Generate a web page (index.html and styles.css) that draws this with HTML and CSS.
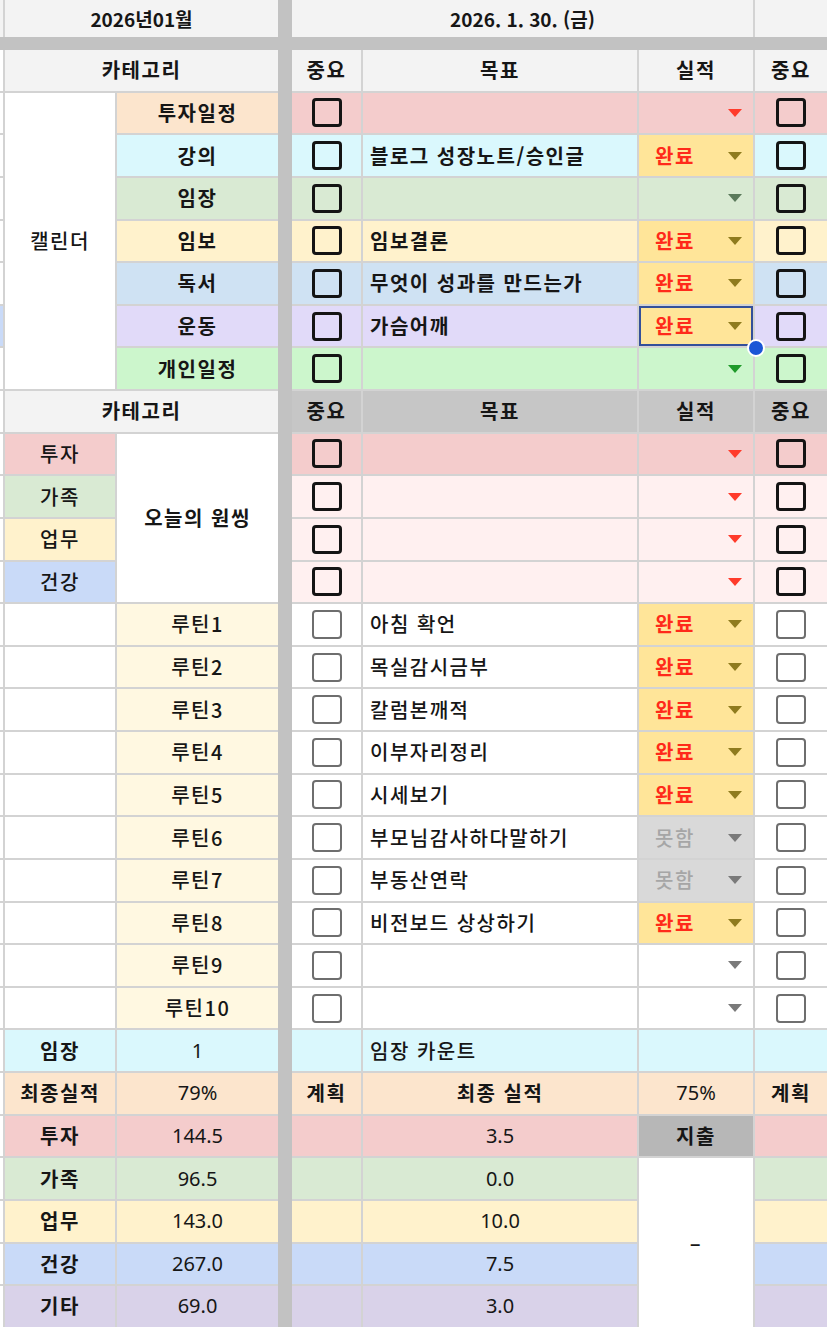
FILE: index.html
```html
<!DOCTYPE html>
<html lang="ko">
<head>
<meta charset="utf-8">
<title>2026년01월</title>
<link rel="stylesheet" href="styles.css">
</head>
<body>
<div class="sheet">
  <div class="sep"></div>
  <div class="band"></div>

  <!-- header -->
  <div class="c hd"></div>
  <div class="c hd b s2 ttl">2026년01월</div>
  <div class="c hd b s3 ttl">2026. 1. 30. (금)</div>
  <div class="c hd"></div>

  <!-- category header -->
  <div class="c"></div>
  <div class="c hd b s2">카테고리</div>
  <div class="c hd b">중요</div>
  <div class="c hd b">목표</div>
  <div class="c hd b">실적</div>
  <div class="c hd b">중요</div>

  <!-- calendar -->
  <div class="c"></div>
  <div class="c cal">캘린더</div>
  <div class="c peach b">투자일정</div>
  <div class="c pink"><i class="cb"></i></div>
  <div class="c pink t"></div>
  <div class="c pink dd"><span></span><i class="ar ar-r"></i></div>
  <div class="c pink"><i class="cb"></i></div>

  <div class="c"></div>
  <div class="c cyan b">강의</div>
  <div class="c cyan"><i class="cb"></i></div>
  <div class="c cyan t b">블로그 성장노트/승인글</div>
  <div class="c gold dd"><span class="done">완료</span><i class="ar ar-y"></i></div>
  <div class="c cyan"><i class="cb"></i></div>

  <div class="c"></div>
  <div class="c green b">임장</div>
  <div class="c green"><i class="cb"></i></div>
  <div class="c green t"></div>
  <div class="c green dd"><span></span><i class="ar ar-dg"></i></div>
  <div class="c green"><i class="cb"></i></div>

  <div class="c"></div>
  <div class="c yel b">임보</div>
  <div class="c yel"><i class="cb"></i></div>
  <div class="c yel t b">임보결론</div>
  <div class="c gold dd"><span class="done">완료</span><i class="ar ar-y"></i></div>
  <div class="c yel"><i class="cb"></i></div>

  <div class="c"></div>
  <div class="c blue b">독서</div>
  <div class="c blue"><i class="cb"></i></div>
  <div class="c blue t b">무엇이 성과를 만드는가</div>
  <div class="c gold dd"><span class="done">완료</span><i class="ar ar-y"></i></div>
  <div class="c blue"><i class="cb"></i></div>

  <div class="c tint"></div>
  <div class="c lav b">운동</div>
  <div class="c lav"><i class="cb"></i></div>
  <div class="c lav t b">가슴어깨</div>
  <div class="c gold dd sel"><span class="done">완료</span><i class="ar ar-y"></i><span class="handle"></span></div>
  <div class="c lav"><i class="cb"></i></div>

  <div class="c"></div>
  <div class="c lgreen b">개인일정</div>
  <div class="c lgreen"><i class="cb"></i></div>
  <div class="c lgreen t"></div>
  <div class="c lgreen dd"><span></span><i class="ar ar-gr"></i></div>
  <div class="c lgreen"><i class="cb"></i></div>

  <!-- category header 2 -->
  <div class="c"></div>
  <div class="c hd b s2">카테고리</div>
  <div class="c hd2 b">중요</div>
  <div class="c hd2 b">목표</div>
  <div class="c hd2 b">실적</div>
  <div class="c hd2 b">중요</div>

  <!-- one thing -->
  <div class="c"></div>
  <div class="c pink m">투자</div>
  <div class="c one b">오늘의 원씽</div>
  <div class="c pink"><i class="cb"></i></div>
  <div class="c pink t"></div>
  <div class="c pink dd"><span></span><i class="ar ar-r"></i></div>
  <div class="c pink"><i class="cb"></i></div>

  <div class="c"></div>
  <div class="c green m">가족</div>
  <div class="c blush"><i class="cb"></i></div>
  <div class="c blush t"></div>
  <div class="c blush dd"><span></span><i class="ar ar-r"></i></div>
  <div class="c blush"><i class="cb"></i></div>

  <div class="c"></div>
  <div class="c yel m">업무</div>
  <div class="c blush"><i class="cb"></i></div>
  <div class="c blush t"></div>
  <div class="c blush dd"><span></span><i class="ar ar-r"></i></div>
  <div class="c blush"><i class="cb"></i></div>

  <div class="c"></div>
  <div class="c blue2 m">건강</div>
  <div class="c blush"><i class="cb"></i></div>
  <div class="c blush t"></div>
  <div class="c blush dd"><span></span><i class="ar ar-r"></i></div>
  <div class="c blush"><i class="cb"></i></div>

  <!-- routines -->
  <div class="c"></div><div class="c"></div>
  <div class="c cream m">루틴1</div>
  <div class="c"><i class="cb g"></i></div>
  <div class="c t m">아침 확언</div>
  <div class="c gold dd"><span class="done">완료</span><i class="ar ar-y"></i></div>
  <div class="c"><i class="cb g"></i></div>

  <div class="c"></div><div class="c"></div>
  <div class="c cream m">루틴2</div>
  <div class="c"><i class="cb g"></i></div>
  <div class="c t m">목실감시금부</div>
  <div class="c gold dd"><span class="done">완료</span><i class="ar ar-y"></i></div>
  <div class="c"><i class="cb g"></i></div>

  <div class="c"></div><div class="c"></div>
  <div class="c cream m">루틴3</div>
  <div class="c"><i class="cb g"></i></div>
  <div class="c t m">칼럼본깨적</div>
  <div class="c gold dd"><span class="done">완료</span><i class="ar ar-y"></i></div>
  <div class="c"><i class="cb g"></i></div>

  <div class="c"></div><div class="c"></div>
  <div class="c cream m">루틴4</div>
  <div class="c"><i class="cb g"></i></div>
  <div class="c t m">이부자리정리</div>
  <div class="c gold dd"><span class="done">완료</span><i class="ar ar-y"></i></div>
  <div class="c"><i class="cb g"></i></div>

  <div class="c"></div><div class="c"></div>
  <div class="c cream m">루틴5</div>
  <div class="c"><i class="cb g"></i></div>
  <div class="c t m">시세보기</div>
  <div class="c gold dd"><span class="done">완료</span><i class="ar ar-y"></i></div>
  <div class="c"><i class="cb g"></i></div>

  <div class="c"></div><div class="c"></div>
  <div class="c cream m">루틴6</div>
  <div class="c"><i class="cb g"></i></div>
  <div class="c t m">부모님감사하다말하기</div>
  <div class="c grey dd"><span class="no">못함</span><i class="ar ar-g"></i></div>
  <div class="c"><i class="cb g"></i></div>

  <div class="c"></div><div class="c"></div>
  <div class="c cream m">루틴7</div>
  <div class="c"><i class="cb g"></i></div>
  <div class="c t m">부동산연락</div>
  <div class="c grey dd"><span class="no">못함</span><i class="ar ar-g"></i></div>
  <div class="c"><i class="cb g"></i></div>

  <div class="c"></div><div class="c"></div>
  <div class="c cream m">루틴8</div>
  <div class="c"><i class="cb g"></i></div>
  <div class="c t m">비전보드 상상하기</div>
  <div class="c gold dd"><span class="done">완료</span><i class="ar ar-y"></i></div>
  <div class="c"><i class="cb g"></i></div>

  <div class="c"></div><div class="c"></div>
  <div class="c cream m">루틴9</div>
  <div class="c"><i class="cb g"></i></div>
  <div class="c t"></div>
  <div class="c dd"><span></span><i class="ar ar-g"></i></div>
  <div class="c"><i class="cb g"></i></div>

  <div class="c"></div><div class="c"></div>
  <div class="c cream m">루틴10</div>
  <div class="c"><i class="cb g"></i></div>
  <div class="c t"></div>
  <div class="c dd"><span></span><i class="ar ar-g"></i></div>
  <div class="c"><i class="cb g"></i></div>

  <!-- summary -->
  <div class="c"></div>
  <div class="c cyan b">임장</div>
  <div class="c cyan n">1</div>
  <div class="c cyan"></div>
  <div class="c cyan t m">임장 카운트</div>
  <div class="c cyan"></div>
  <div class="c cyan"></div>

  <div class="c"></div>
  <div class="c peach b">최종실적</div>
  <div class="c peach n">79%</div>
  <div class="c peach b">계획</div>
  <div class="c peach b">최종 실적</div>
  <div class="c peach n">75%</div>
  <div class="c peach b">계획</div>

  <div class="c"></div>
  <div class="c pink b">투자</div>
  <div class="c pink n">144.5</div>
  <div class="c pink"></div>
  <div class="c pink n">3.5</div>
  <div class="c dgrey b">지출</div>
  <div class="c pink"></div>

  <div class="c"></div>
  <div class="c green b">가족</div>
  <div class="c green n">96.5</div>
  <div class="c green"></div>
  <div class="c green n">0.0</div>
  <div class="c dash b">–</div>
  <div class="c green"></div>

  <div class="c"></div>
  <div class="c yel b">업무</div>
  <div class="c yel n">143.0</div>
  <div class="c yel"></div>
  <div class="c yel n">10.0</div>
  <div class="c yel"></div>

  <div class="c"></div>
  <div class="c blue2 b">건강</div>
  <div class="c blue2 n">267.0</div>
  <div class="c blue2"></div>
  <div class="c blue2 n">7.5</div>
  <div class="c blue2"></div>

  <div class="c"></div>
  <div class="c purple b">기타</div>
  <div class="c purple n">69.0</div>
  <div class="c purple"></div>
  <div class="c purple n">3.0</div>
  <div class="c purple"></div>
</div>
</body>
</html>
```

FILE: styles.css
```css
* { box-sizing: border-box; }

html, body {
  margin: 0;
  padding: 0;
  background: #ffffff;
}

body {
  font-family: "Noto Sans CJK KR", "Noto Sans", sans-serif;
  font-size: 20px;
  color: #161616;
  overflow: hidden;
}

.sheet {
  display: grid;
  grid-template-columns: 3px 110px 161px 10px 69px 274px 114px 72px;
  grid-template-rows: 37px 9px repeat(30, 40.63px);
  gap: 2px;
  background: #d3d3d3;
  width: 827px;
  height: 1327px;
  overflow: hidden;
}

.sep {
  grid-column: 4;
  grid-row: 1 / -1;
  margin: 0 -2px;
  background: #c2c2c2;
}

.band {
  grid-column: 1 / -1;
  grid-row: 2;
  margin: -2px 0;
  background: #c2c2c2;
}

.c {
  display: flex;
  align-items: center;
  justify-content: center;
  background: #ffffff;
  white-space: nowrap;
  overflow: hidden;
  line-height: 1;
  letter-spacing: 1.5px;
}

.ttl { letter-spacing: 0; font-size: 19px; }

.s2 { grid-column: span 2; }
.s3 { grid-column: span 3; }

.b { font-weight: 700; }
.m { font-weight: 500; }
.n {
  font-weight: 400;
  letter-spacing: 0;
  font-family: "Noto Sans", "Noto Sans CJK KR", sans-serif;
}

.t {
  justify-content: flex-start;
  padding-left: 7px;
}

.cal {
  grid-row: span 7;
  font-weight: 500;
}

.one { grid-row: span 4; }
.dash { grid-row: span 4; }

/* colors */
.hd { background: #f3f3f3; }
.hd2 { background: #c6c6c6; }
.peach { background: #fce5cd; }
.pink { background: #f4cccc; }
.cyan { background: #daf8fd; }
.green { background: #d9ead3; }
.yel { background: #fff2cc; }
.blue { background: #cfe2f3; }
.blue2 { background: #c9daf8; }
.lav { background: #e1daf9; }
.lgreen { background: #ccf6cc; }
.purple { background: #d9d2e9; }
.cream { background: #fff8e1; }
.blush { background: #fff0f0; }
.gold { background: #ffe599; }
.grey { background: #d9d9d9; }
.dgrey { background: #b7b7b7; }
.tint { background: #c9daf8; }

/* checkbox */
.cb {
  display: block;
  width: 30px;
  height: 29px;
  border: 3px solid #141414;
  border-radius: 4px;
}
.cb.g {
  border-color: #6e6e6e;
  border-width: 2.5px;
}

/* dropdown */
.dd {
  justify-content: space-between;
  padding: 0 11px 0 16px;
}
.done {
  color: #ff2a1a;
  font-weight: 700;
}
.no {
  color: #a6a6a6;
  font-weight: 500;
}
.ar {
  display: block;
  width: 0;
  height: 0;
  border-left: 7.5px solid transparent;
  border-right: 7.5px solid transparent;
  border-top: 8px solid #8c7a22;
}
.ar-r { border-top-color: #ff3b2b; }
.ar-y { border-top-color: #8f7b1e; }
.ar-dg { border-top-color: #5b7a5b; }
.ar-gr { border-top-color: #1f9a2a; }
.ar-g { border-top-color: #7a7a7a; }

/* selection */
.sel {
  position: relative;
  overflow: visible;
  box-shadow: inset 0 0 0 2px #34509a;
}
.handle {
  position: absolute;
  right: -12px;
  bottom: -11px;
  width: 18px;
  height: 18px;
  border-radius: 50%;
  background: #1a56d6;
  border: 2px solid #ffffff;
  z-index: 2;
}
```
